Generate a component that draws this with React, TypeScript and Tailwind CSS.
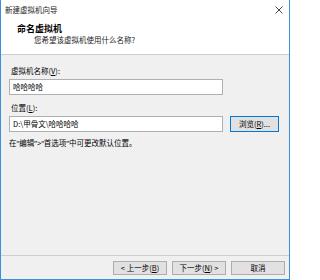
import React from "react";

const font = { fontFamily: '"Noto Sans CJK SC", "Noto Sans", sans-serif' };
const mixed = { fontFamily: '"Noto Sans", "Noto Sans CJK SC", sans-serif' };

function U({ c }: { c: string }) {
  return <span className="underline underline-offset-[1px]">{c}</span>;
}

function Btn({ children, w, primary }: { children: React.ReactNode; w: string; primary?: boolean }) {
  return (
    <div
      className={`${w} h-[14px] flex items-center justify-center bg-[#e1e1e1] border ${
        primary ? "border-[#0078d7]" : "border-[#adadad]"
      } text-[7.5px] leading-none text-black`}
    >
      {children}
    </div>
  );
}

export default function App() {
  return (
    <div
      className="w-[290px] h-[280px] flex flex-col bg-[#f0f0f0] border-l border-r border-b border-[#3c8fdc] text-black"
      style={font}
    >
      {/* Title bar */}
      <div className="h-[20px] bg-white flex items-center justify-between pl-[4px] pr-[6px]">
        <span className="text-[7.5px] leading-[10px] text-[#222]">新建虚拟机向导</span>
        <svg width="8" height="8" viewBox="0 0 8 8">
          <path d="M0.5 0.5 L7.5 7.5 M7.5 0.5 L0.5 7.5" stroke="#333" strokeWidth="0.9" fill="none" />
        </svg>
      </div>
      {/* Header */}
      <div className="h-[34px] bg-white flex flex-col pt-[4px]">
        <div className="pl-[16px] text-[9px] leading-[10px] font-bold">命名虚拟机</div>
        <div className="pl-[33px] mt-[1px] text-[7.5px] leading-[10px] text-[#222]">您希望该虚拟机使用什么名称?</div>
      </div>
      <div className="h-[1px] bg-[#cfcfcf]" />
      {/* Body */}
      <div className="flex-1 flex flex-col px-[8px] pt-[11px]">
        <div className="pl-[2px] text-[7.5px] leading-[10px]">
          虚拟机名称(<U c="V" />):
        </div>
        <div className="mt-[3px] w-[214px] h-[16px] bg-white border border-[#b0b0b0] flex items-center pl-[3px] text-[7.5px] leading-none">
          哈哈哈哈
        </div>
        <div className="mt-[8px] pl-[2px] text-[7.5px] leading-[10px]">
          位置(<U c="L" />):
        </div>
        <div className="mt-[3px] flex items-center gap-[7px]">
          <div className="w-[214px] h-[16px] bg-white border border-[#b0b0b0] flex items-center pl-[3px] text-[7.5px] leading-none">
            D:\甲骨文\哈哈哈哈
          </div>
          <div className="w-[49px] h-[16px] flex items-center justify-center bg-[#e1e1e1] border border-[#0078d7] text-[7.5px] leading-none">
            浏览(<U c="R" />)...
          </div>
        </div>
        <div className="mt-[6px] text-[7.5px] leading-[10px]" style={mixed}>
          在“编辑”&gt;“首选项”中可更改默认位置。
        </div>
      </div>
      <div className="h-[1px] bg-[#cfcfcf]" />
      {/* Footer */}
      <div className="h-[23px] flex items-start justify-end pt-[5px] pr-[4px] gap-[5px]">
        <Btn w="w-[54px]">
          &lt; 上一步(<U c="B" />)
        </Btn>
        <Btn w="w-[54px]">
          下一步(<U c="N" />) &gt;
        </Btn>
        <Btn w="w-[54px]">取消</Btn>
      </div>
    </div>
  );
}
